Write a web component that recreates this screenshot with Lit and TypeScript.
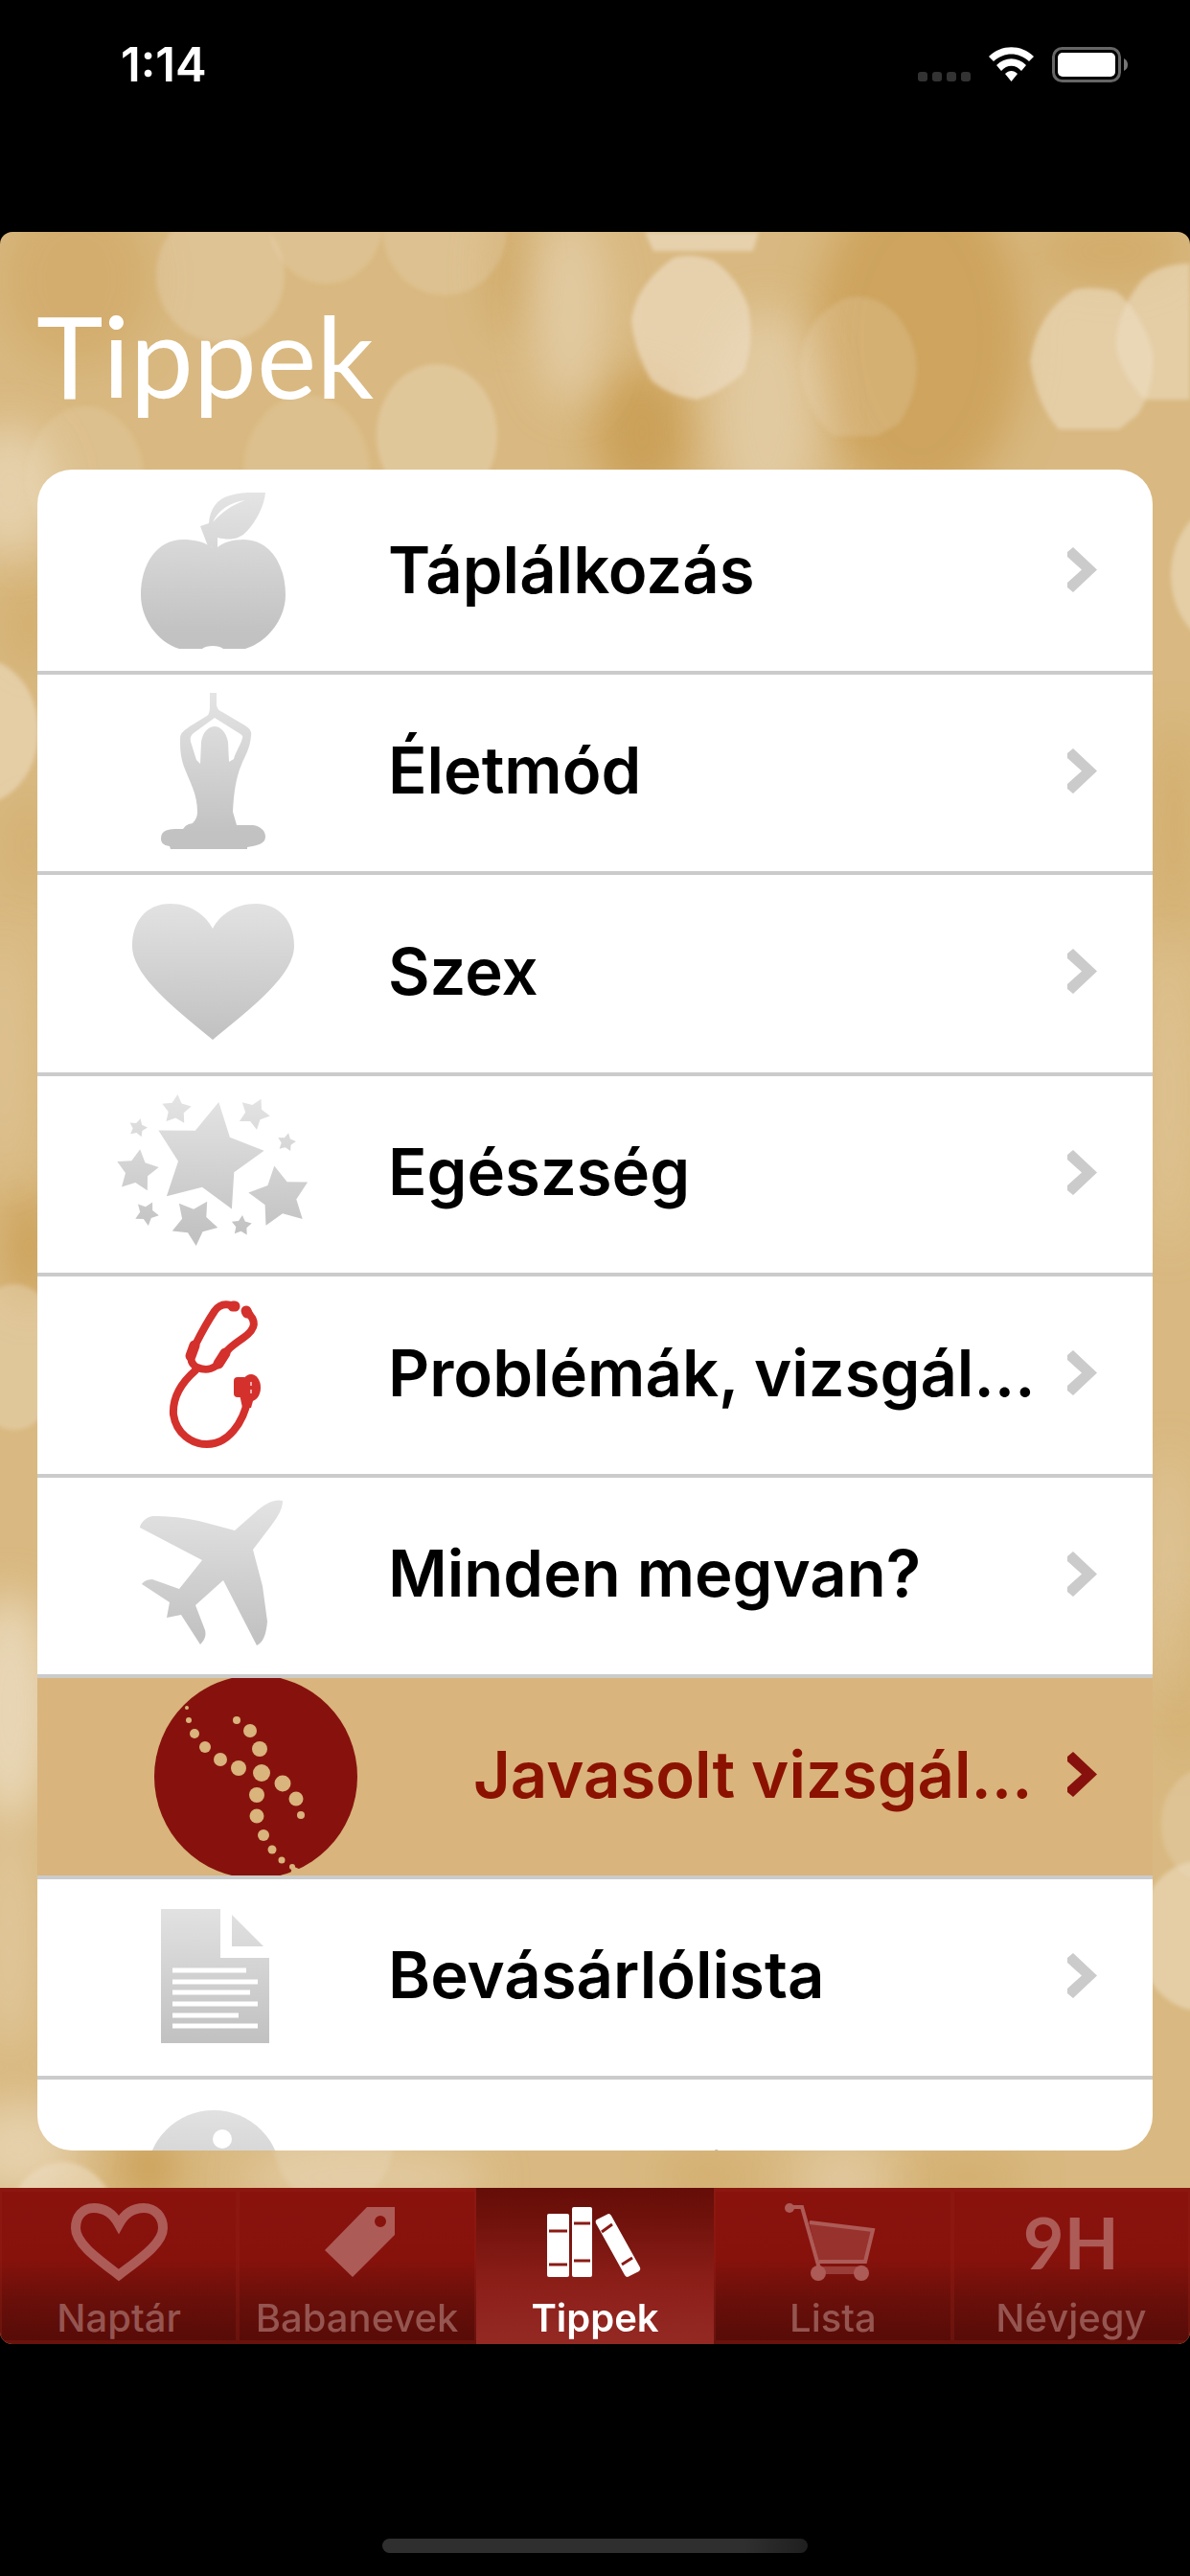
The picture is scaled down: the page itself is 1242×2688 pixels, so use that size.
import { LitElement, html, svg, css } from 'lit';
import type { SVGTemplateResult } from 'lit';
import { customElement, state } from 'lit/decorators.js';
import { classMap } from 'lit/directives/class-map.js';

interface Tip {
  label: string;
  icon: SVGTemplateResult;
  featured?: boolean;
}

interface Tab {
  label: string;
  icon?: SVGTemplateResult;
  mark?: string;
}

// five-pointed star, rotated clockwise by `turn` degrees
const star = (cx: number, cy: number, r: number, turn: number) => {
  const points = [];
  for (let i = 0; i < 10; i++) {
    const radius = i % 2 ? r * 0.53 : r;
    const angle = ((turn + i * 36 - 90) * Math.PI) / 180;
    points.push(`${(cx + radius * Math.cos(angle)).toFixed(1)},${(cy + radius * Math.sin(angle)).toFixed(1)}`);
  }
  return svg`<polygon points=${points.join(' ')} />`;
};

const stars = [
  [85, 85, 59, 11], [52, 35, 16, 5], [133, 39, 17, 170], [12, 54, 10, 15], [167, 69, 10, 12],
  [11, 99, 23, 8], [160, 126, 33, -10], [21, 143, 13, 172], [71, 152, 25, 176], [120, 156, 11, 5],
];

const beads = [
  [34, 30, 2], [36, 43, 3], [42, 57, 5], [53, 71, 6], [69, 84, 7], [88, 93, 8], [112, 98, 9],
  [86, 43, 4], [100, 54, 7], [110, 73, 8], [134, 109, 8.5], [148, 125, 7.5], [153, 142, 4],
  [107, 121, 8], [107, 143, 7.5], [114, 163, 6], [123, 178, 4.5], [133, 189, 3.5], [144, 196, 3],
];

const apple = svg`
  <path d="M89 76C80 70 70 68 59 68C32 68 15 93 15 126C15 150 32 175 55 182H79C83 178 97 178 101 182H124C148 175 166 150 166 126C166 93 149 68 122 68C110 68 101 71 95 76Z" />
  <path d="M77 54L86 51C87 36 95 25 108 22C120 18 133 19 145 19C144 32 136 48 126 59C118 68 108 69 95 66V77L85 75Z" />
  <path fill="#fff" d="M90 50C95 38 108 29 124 27C110 32 100 39 90 50Z" />`;

const yoga = svg`
  <path fill-rule="evenodd" d="M87 19H94V32C95 36 97 38 100 39L122 52C129 56 131 59 130 64C129 77 124 84 120 94C114 108 112 124 111 143L115 157H132C140 158 145 163 145 169C145 176 138 178 126 180V182H46L45 179C38 178 36 175 36 171C36 160 48 161 59 161C62 157 64 156 69 155C73 151 74 147 74 143C74 124 66 112 60 96C56 84 56 76 56 67C56 60 61 58 66 54L84 43C87 41 87 36 87 30Z
    M92 45L70 61C66 64 66 68 68 73L73 89L77 93L78 70C80 59 86 54 92 54C98 54 104 60 106 70L107 91L112 88C114 80 119 74 121 66C122 64 120 63 119 62Z" />`;

const heart = svg`
  <path d="M90 55C82 40 66 29 46 29C20 29 6 48 6 73C6 104 50 138 90 171C130 138 175 104 175 73C175 48 160 29 135 29C114 29 98 40 90 55Z" />`;

const stethoscope = svg`
  <g fill="none" stroke="#d4312d" stroke-width="8" stroke-linecap="round" stroke-linejoin="round">
    <path d="M114 31C104 26 97 28 92 35C84 47 78 58 72 70C65 82 66 90 74 94C84 98 93 95 98 87C103 76 112 70 122 63C136 53 136 45 125 35" />
    <path d="M72 97C56 111 48 127 49 143C52 163 68 174 84 174C106 174 122 152 127 126" />
    <path stroke-width="11" d="M111 30H113M125 35L126 37M71 71L67 82M96 90L103 79" />
  </g>
  <g fill="#d4312d">
    <rect x="112" y="104" width="14" height="21" rx="4" />
    <ellipse cx="130" cy="115" rx="10" ry="14" />
    <path d="M118 122H134L130 136H121Z" />
  </g>
  <path stroke="#fff" stroke-opacity="0.6" stroke-width="2" d="M130 109V113M130 117V121" />`;

const plane = svg`
  <path d="M163 24C155 22 147 26 138 33L113 55L83 47C62 41 42 40 27 40C20 41 14 48 14 52L79 86L55 116L27 106C21 106 17 109 16 111L45 130L42 146L57 143L77 174C83 168 83 163 82 159L72 133L101 107L136 175C143 172 146 162 147 150L142 113L132 75L151 50C159 39 163 32 163 24Z" />`;

const ultrasound = svg`
  <circle cx="106" cy="102" r="106" fill="#87120d" />
  ${beads.map(([x, y, r]) => svg`<circle cx=${x} cy=${y} r=${r} fill="#d9b47c" />`)}
  <path fill="#d9b47c" d="M142 205L144 195L153 199L160 208Z" />`;

const page = svg`
  <path d="M36 31H98V82H149V171H36ZM110 37V70H143Z" />
  <path stroke="#fff" stroke-width="5" d="M48 95H125M48 107H137M48 118H129M48 130H137M48 142H117M48 153H137" />`;

const info = svg`
  <circle cx="91" cy="101" r="70" />
  <circle cx="100" cy="61" r="10" fill="#fff" />
  <path fill="#fff" d="M80 84H104L96 142H74Z" />`;

const tips: Tip[] = [
  { label: 'Táplálkozás', icon: apple },
  { label: 'Életmód', icon: yoga },
  { label: 'Szex', icon: heart },
  { label: 'Egészség', icon: svg`${stars.map(([x, y, r, turn]) => star(x, y, r, turn))}` },
  { label: 'Problémák, vizsgálatok', icon: stethoscope },
  { label: 'Minden megvan?', icon: plane },
  { label: 'Javasolt vizsgálatok', icon: ultrasound, featured: true },
  { label: 'Bevásárlólista', icon: page },
  { label: 'Mozgás, pihenés', icon: info },
];

const tabs: Tab[] = [
  {
    label: 'Naptár',
    icon: svg`<path fill="none" stroke="currentColor" stroke-width="10" d="M60 38C54 27 45 21 34 21C22 21 15 30 15 42C15 58 38 74 60 91C82 74 106 58 106 42C106 30 98 21 86 21C75 21 66 27 60 38Z" />`,
  },
  {
    label: 'Babanevek',
    icon: svg`<path fill-rule="evenodd" d="M70 20H99V49L55 93L26 65ZM84 29A6 6 0 1 0 84 41A6 6 0 1 0 84 29Z" />`,
  },
  {
    label: 'Tippek',
    icon: svg`
      <rect x="10" y="27" width="23" height="66" rx="2" />
      <rect x="36" y="20" width="21" height="73" rx="2" />
      <path d="M62 33L74 27Q76 27 77 29L107 83Q108 85 106 87L94 93Q92 93 91 91L61 37Q60 34 62 33Z" />
      <path stroke="#8a1a14" stroke-width="3" d="M12 45H31M12 80H31M38 37H55M38 76H55M67 46L78 38M88 80L99 73" />`,
  },
  {
    label: 'Lista',
    icon: svg`
      <path fill-opacity="0.45" d="M35 35L103 44L94 78H46Z" />
      <path fill-opacity="0.6" d="M44 82H92V90H44Z" />
      <path fill="none" stroke="currentColor" stroke-width="4" d="M14 20H28L46 84M36 36L102 44L94 77H46" />
      <circle cx="15" cy="21" r="5" />
      <circle cx="45" cy="89" r="8" />
      <circle cx="90" cy="89" r="8" />`,
  },
  { label: 'Névjegy', mark: '9H' },
];

@customElement('app-root')
export class AppRoot extends LitElement {
  @state() activeTab = 'Tippek';

  static styles = css`
    :host {
      display: flex;
      flex-direction: column;
      height: 100vh;
      background: #000;
      font-family: Inter, 'Liberation Sans', sans-serif;
    }

    a {
      color: inherit;
      text-decoration: none;
    }

    svg {
      display: block;
      flex: none;
    }

    .status-bar {
      box-sizing: border-box;
      flex: none;
      display: flex;
      align-items: flex-start;
      justify-content: space-between;
      height: 242px;
      padding: 49px 65px 0 126px;
      color: #fff;
    }

    .clock {
      font-size: 49px;
      font-weight: 600;
      line-height: 37px;
    }

    .indicators {
      display: flex;
      gap: 19px;
    }

    .screen {
      position: relative;
      flex: 1;
      min-height: 0;
      display: flex;
      flex-direction: column;
      overflow: hidden;
      border-radius: 13px;
      background: #d9b981;
    }

    .backdrop {
      position: absolute;
      inset: 0;
      width: 100%;
      height: 100%;
    }

    .title {
      position: relative;
      box-sizing: border-box;
      flex: none;
      height: 248px;
      margin: 0;
      padding: 70px 38px 0;
      color: #fff;
      font-family: Lato, sans-serif;
      font-size: 118px;
      font-weight: 400;
      line-height: 118px;
    }

    .tips {
      position: relative;
      flex: 1;
      min-height: 0;
      overflow: hidden;
      margin: 0 39px 39px;
      padding: 4px 0 0;
      border-radius: 36px;
      background: #fff;
      list-style: none;
    }

    .tip {
      box-sizing: border-box;
      display: flex;
      align-items: center;
      height: 210px;
      padding-right: 58px;
      border-bottom: 4px solid #cbcbcb;
      color: #000;
      overflow: hidden;
    }

    li:nth-child(even) .tip {
      height: 209px;
    }

    .tip-icon {
      flex: none;
      display: flex;
      justify-content: center;
      width: 366px;
      fill: url(#silver);
    }

    .tip-icon svg {
      overflow: visible;
    }

    .tip-label {
      flex: 1;
      min-width: 0;
      overflow: hidden;
      text-overflow: ellipsis;
      white-space: nowrap;
      font-size: 67px;
      font-weight: 600;
      line-height: 96px;
    }

    .tip-label,
    .chevron {
      margin-bottom: 5px;
    }

    .chevron {
      margin-left: 20px;
      color: #cbcbcb;
    }

    .featured {
      background: #d9b47c;
      color: #8b1100;
    }

    .featured .tip-icon {
      width: 455px;
    }

    .featured .chevron {
      color: #87120d;
    }

    .tabs {
      position: relative;
      flex: none;
      display: flex;
      height: 163px;
    }

    .tab {
      box-sizing: border-box;
      flex: 1;
      min-width: 0;
      display: flex;
      flex-direction: column;
      align-items: center;
      border: 3px solid rgba(150, 35, 25, 0.3);
      border-width: 4px 2px;
      background: linear-gradient(#89120d 0%, #87120c 45%, #690f0a 72%, #560b07 100%);
      background-origin: border-box;
      color: #ad5b57;
    }

    .tab.active {
      border-color: transparent;
      background: linear-gradient(#650d08 0%, #6f110b 18%, #8c1e18 60%, #942924 100%);
      background-origin: border-box;
      color: #fff;
    }

    .tab-icon {
      flex: none;
      height: 109px;
      fill: currentColor;
    }

    .tab-mark {
      padding-top: 16px;
      font-family: Lato, sans-serif;
      font-size: 74px;
      font-weight: 700;
      line-height: 74px;
    }

    .tab-label {
      color: #955551;
      font-size: 40px;
      font-weight: 500;
      line-height: 46px;
    }

    .active .tab-label {
      color: #fff;
      font-weight: 600;
    }

    .home-area {
      box-sizing: border-box;
      flex: none;
      display: flex;
      align-items: flex-end;
      justify-content: center;
      height: 242px;
      padding-bottom: 24px;
    }

    .home-indicator {
      width: 444px;
      height: 15px;
      border-radius: 8px;
      background: linear-gradient(90deg, #2f2f2f 85%, #1f1f1f);
    }
  `;

  private renderStatusBar() {
    return html`
      <div class="status-bar">
        <div class="clock">1:14</div>
        <div class="indicators">
          <svg width="55" height="37" viewBox="0 0 55 37" fill="#333">
            ${[0, 15, 30, 45].map((x) => svg`<rect x=${x} y="26" width="10" height="10" rx="3" />`)}
          </svg>
          <svg width="47" height="37" viewBox="0 0 47 37" fill="#fff">
            <path d="M0 10C13-3 34-3 47 10L42 15C31 5 16 5 5 15Z" />
            <path d="M8 19C17 10 30 10 39 19L34 25C28 18 19 18 13 25Z" />
            <path d="M17 28C21 24 26 24 30 28L23.500 36Z" />
          </svg>
          <svg width="79" height="37" viewBox="0 0 79 37">
            <rect x="1.500" y="1.500" width="69" height="34" rx="9" fill="none" stroke="#666" stroke-width="3" />
            <rect x="6" y="6" width="60" height="25" rx="5" fill="#fff" />
            <path fill="#777" d="M75 12Q79 14 79 18.500Q79 23 75 25Z" />
          </svg>
        </div>
      </div>
    `;
  }

  // gold bokeh: blurred smears below, crisper discs above
  private renderBackdrop() {
    return html`
      <svg class="backdrop" viewBox="0 0 1242 2204" preserveAspectRatio="xMidYMin slice" aria-hidden="true">
        <defs>
          <linearGradient id="silver" gradientUnits="userSpaceOnUse" x1="0" y1="20" x2="0" y2="165">
            <stop offset="0" stop-color="#e4e4e4" />
            <stop offset="1" stop-color="#c2c2c2" />
          </linearGradient>
          <filter id="haze" x="-50%" y="-50%" width="200%" height="200%">
            <feGaussianBlur stdDeviation="22" />
          </filter>
          <filter id="soft">
            <feGaussianBlur stdDeviation="2" />
          </filter>
        </defs>
        <g filter="url(#haze)" fill="#cba058">
          <ellipse cx="80" cy="50" rx="80" ry="90" opacity="0.45" />
          <ellipse cx="960" cy="110" rx="110" ry="170" opacity="0.85" />
          <ellipse cx="670" cy="210" rx="50" ry="70" />
          <ellipse cx="530" cy="40" rx="18" ry="70" opacity="0.7" />
          <ellipse cx="1160" cy="20" rx="80" ry="40" opacity="0.5" />
          <ellipse cx="30" cy="410" rx="20" ry="50" opacity="0.5" />
          <ellipse cx="30" cy="640" rx="20" ry="50" opacity="0.4" />
          <ellipse cx="30" cy="1060" rx="25" ry="60" />
          <ellipse cx="155" cy="2020" rx="30" ry="40" />
          <ellipse cx="740" cy="2030" rx="50" ry="30" opacity="0.4" />
          <ellipse cx="1010" cy="2030" rx="60" ry="30" opacity="0.4" />
          <ellipse cx="1225" cy="620" rx="20" ry="110" opacity="0.5" />
          <ellipse cx="1235" cy="1510" rx="15" ry="90" opacity="0.5" />
        </g>
        <g filter="url(#haze)" fill="#e8d6b5">
          <ellipse cx="595" cy="80" rx="38" ry="100" opacity="0.6" />
          <ellipse cx="800" cy="190" rx="55" ry="110" opacity="0.6" />
          <ellipse cx="10" cy="270" rx="50" ry="70" opacity="0.8" />
          <ellipse cx="5" cy="860" rx="14" ry="130" opacity="0.5" />
          <ellipse cx="10" cy="1540" rx="45" ry="120" />
          <ellipse cx="10" cy="1780" rx="22" ry="120" opacity="0.6" />
          <ellipse cx="20" cy="2000" rx="60" ry="50" opacity="0.8" />
          <ellipse cx="380" cy="2030" rx="130" ry="30" opacity="0.6" />
          <ellipse cx="880" cy="2030" rx="50" ry="40" opacity="0.5" />
          <ellipse cx="1220" cy="900" rx="18" ry="160" opacity="0.4" />
          <ellipse cx="1220" cy="1400" rx="18" ry="130" opacity="0.5" />
        </g>
        <g filter="url(#soft)" fill="#ecdcc0">
          <ellipse cx="230" cy="45" rx="67" ry="70" opacity="0.3" />
          <ellipse cx="340" cy="-12" rx="60" ry="66" opacity="0.25" />
          <ellipse cx="464" cy="0" rx="64" ry="66" opacity="0.25" />
          <path d="M673 0H792L786 20H682Z" opacity="0.7" />
          <path d="M703 27Q722 22 745 30Q770 48 781 78Q788 115 776 147Q752 168 728 175Q700 172 680 155Q662 125 659 92Q664 55 703 27Z" opacity="0.7" />
          <path d="M880 70Q900 64 920 74Q946 90 955 125Q962 165 938 200L915 213H870Q844 190 836 150Q832 95 880 70Z" opacity="0.22" />
          <path d="M1122 60Q1142 56 1165 62Q1192 85 1203 125Q1206 160 1188 190L1168 206H1105Q1082 180 1075 135Q1082 85 1122 60Z" opacity="0.6" />
          <path d="M1242 33Q1210 33 1192 50Q1164 85 1165 120Q1170 150 1195 175H1242Z" opacity="0.6" />
          <ellipse cx="456" cy="212" rx="63" ry="74" opacity="0.4" />
          <ellipse cx="89" cy="256" rx="61" ry="74" opacity="0.2" />
          <ellipse cx="320" cy="250" rx="66" ry="80" opacity="0.2" />
          <ellipse cx="-22" cy="521" rx="62" ry="76" opacity="0.6" />
          <ellipse cx="15" cy="1174" rx="50" ry="76" opacity="0.4" />
          <ellipse cx="1284" cy="358" rx="62" ry="76" opacity="0.6" />
          <ellipse cx="1252" cy="1778" rx="64" ry="78" opacity="0.6" />
          <ellipse cx="1262" cy="1662" rx="50" ry="60" opacity="0.3" />
          <ellipse cx="348" cy="1985" rx="64" ry="76" opacity="0.3" />
          <ellipse cx="65" cy="2090" rx="60" ry="76" opacity="0.6" />
        </g>
      </svg>
    `;
  }

  private renderTip(tip: Tip) {
    const width = tip.featured ? 212 : 180;
    return html`
      <li>
        <a class=${classMap({ tip: true, featured: !!tip.featured })} href="#">
          <span class="tip-icon">
            <svg width=${width} height="205" viewBox="0 0 ${width} 205" aria-hidden="true">${tip.icon}</svg>
          </span>
          <span class="tip-label">${tip.label}</span>
          <svg class="chevron" width="31" height="47" viewBox="0 0 31 47" aria-hidden="true">
            <path fill="currentColor" d="M0 5L6 0L31 23.500L6 47L0 42V37L15 23.500L0 10Z" />
          </svg>
        </a>
      </li>
    `;
  }

  private renderTab(tab: Tab) {
    return html`
      <a
        class=${classMap({ tab: true, active: tab.label === this.activeTab })}
        href="#"
        @click=${() => (this.activeTab = tab.label)}
      >
        <span class="tab-icon">
          ${tab.mark
            ? html`<div class="tab-mark">${tab.mark}</div>`
            : html`<svg width="120" height="109" viewBox="0 4 120 109" aria-hidden="true">${tab.icon}</svg>`}
        </span>
        <span class="tab-label">${tab.label}</span>
      </a>
    `;
  }

  render() {
    return html`
      ${this.renderStatusBar()}
      <main class="screen">
        ${this.renderBackdrop()}
        <h1 class="title">Tippek</h1>
        <ul class="tips">${tips.map((tip) => this.renderTip(tip))}</ul>
        <nav class="tabs">${tabs.map((tab) => this.renderTab(tab))}</nav>
      </main>
      <div class="home-area"><div class="home-indicator"></div></div>
    `;
  }
}
